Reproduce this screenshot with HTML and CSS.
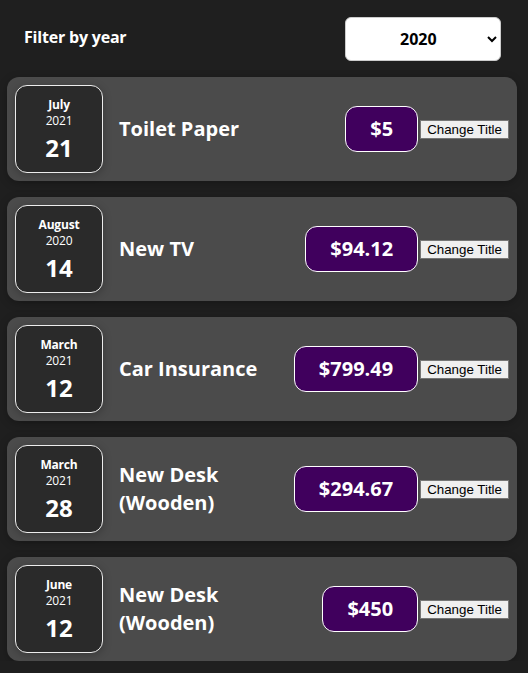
FILE: index.html
```html
<!DOCTYPE html>
<html lang="en">
<head>
<meta charset="utf-8">
<title>Expenses</title>
<link rel="stylesheet" href="styles.css">
</head>
<body>
<div class="expenses">
  <div class="filter">
    <div class="filter-control">
      <label class="filter-label">Filter by year</label>
      <select class="filter-select">
        <option>2022</option>
        <option>2021</option>
        <option selected>2020</option>
        <option>2019</option>
      </select>
    </div>
  </div>
  <ul class="list">
    <li class="item">
      <div class="date"><div class="month">July</div><div class="year">2021</div><div class="day">21</div></div>
      <div class="desc"><h2 class="title">Toilet Paper</h2><div class="price">$5</div></div>
      <button class="btn">Change Title</button>
    </li>
    <li class="item">
      <div class="date"><div class="month">August</div><div class="year">2020</div><div class="day">14</div></div>
      <div class="desc"><h2 class="title">New TV</h2><div class="price">$94.12</div></div>
      <button class="btn">Change Title</button>
    </li>
    <li class="item">
      <div class="date"><div class="month">March</div><div class="year">2021</div><div class="day">12</div></div>
      <div class="desc"><h2 class="title">Car Insurance</h2><div class="price">$799.49</div></div>
      <button class="btn">Change Title</button>
    </li>
    <li class="item">
      <div class="date"><div class="month">March</div><div class="year">2021</div><div class="day">28</div></div>
      <div class="desc"><h2 class="title">New Desk (Wooden)</h2><div class="price">$294.67</div></div>
      <button class="btn">Change Title</button>
    </li>
    <li class="item">
      <div class="date"><div class="month">June</div><div class="year">2021</div><div class="day">12</div></div>
      <div class="desc"><h2 class="title">New Desk (Wooden)</h2><div class="price">$450</div></div>
      <button class="btn">Change Title</button>
    </li>
  </ul>
</div>
</body>
</html>
```
FILE: styles.css
```css
html, body {
  margin: 0;
  background: #1f1f1f;
}
body {
  font-family: "Open Sans", "Noto Sans", sans-serif;
}
.expenses {
  padding: 1px 11px 0 7px;
}
.filter {
  color: white;
  padding: 0 16px 0 17px;
}
.filter-control {
  display: flex;
  align-items: center;
  justify-content: space-between;
  margin: 16px 0 16px;
}
.filter-label {
  font-weight: bold;
  font-size: 16px;
  letter-spacing: -0.2px;
  margin-bottom: 5px;
}
.filter-select {
  font: inherit;
  font-size: 16px;
  font-weight: bold;
  padding: 0 40px 0 50px;
  width: 156px;
  height: 44px;
  border-radius: 6px;
  border: 1px solid #ccc;
  background: white;
  color: black;
}
.list {
  list-style: none;
  margin: 0;
  padding: 0;
  display: flex;
  flex-direction: column;
  gap: 16px;
}
.item {
  display: flex;
  align-items: center;
  padding: 8px;
  border-radius: 12px;
  background: #4b4b4b;
  box-shadow: 0 2px 8px rgba(0,0,0,0.25);
}
.date {
  box-sizing: border-box;
  width: 88px;
  height: 88px;
  padding-top: 2px;
  flex: none;
  display: flex;
  flex-direction: column;
  align-items: center;
  justify-content: center;
  border: 1px solid #ececec;
  border-radius: 12px;
  background: #2a2a2a;
  color: white;
  box-shadow: 0 2px 8px rgba(0,0,0,0.25);
}
.month {
  font-size: 12px;
  font-weight: bold;
  letter-spacing: -0.2px;
  line-height: 16px;
}
.year {
  font-size: 12px;
  letter-spacing: -0.2px;
  line-height: 16px;
}
.day {
  font-size: 24px;
  font-weight: bold;
  line-height: 32px;
  margin-top: 3px;
}
.desc {
  flex: 1;
  display: flex;
  align-items: center;
}
.title {
  flex: 1;
  margin: 0 16px;
  font-size: 20px;
  line-height: 28px;
  color: white;
}
.price {
  font-size: 20px;
  line-height: 28px;
  font-weight: bold;
  color: white;
  background: #40005d;
  border: 1px solid white;
  padding: 8px 24px;
  border-radius: 12px;
}
.btn {
  margin-left: 2px;
  font-family: "Liberation Sans", Arial, sans-serif;
  font-size: 13.33px;
  padding: 1px 6px;
  border: 1px solid #767676;
  border-radius: 0;
  background: #efefef;
  color: black;
  height: 19px;
  line-height: 15px;
}
```
